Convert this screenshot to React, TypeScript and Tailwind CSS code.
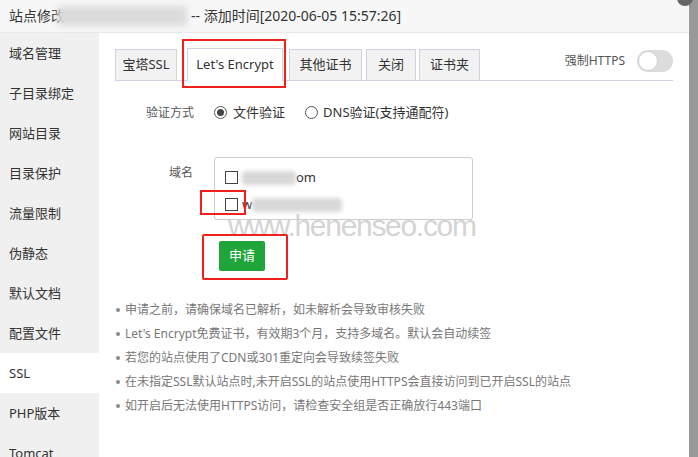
import React from "react";

const font = { fontFamily: '"Noto Sans", "Noto Sans CJK SC", sans-serif' };

const menu = ["域名管理", "子目录绑定", "网站目录", "目录保护", "流量限制", "伪静态", "默认文档", "配置文件", "SSL", "PHP版本", "Tomcat"];

const tips = [
  "申请之前，请确保域名已解析，如未解析会导致审核失败",
  "Let's Encrypt免费证书，有效期3个月，支持多域名。默认会自动续签",
  "若您的站点使用了CDN或301重定向会导致续签失败",
  "在未指定SSL默认站点时,未开启SSL的站点使用HTTPS会直接访问到已开启SSL的站点",
  "如开启后无法使用HTTPS访问，请检查安全组是否正确放行443端口",
];

const Blur = ({ w }: { w: number }) => (
  <span className="inline-block h-[14px] rounded-sm bg-[#d8d8d8] blur-[2px] align-middle" style={{ width: w }} />
);

export default function App() {
  return (
    <div className="flex h-[457px] w-[698px] overflow-hidden bg-white text-[#333]" style={font}>
      <div className="flex w-[689px] flex-col">
        {/* title bar */}
        <div className="flex h-[33px] shrink-0 items-center border-b border-[#e8e8e8] bg-[#f7f7f7] pl-[9px] text-[14px] leading-none">
          <span>站点修改</span>
          <span className="-ml-[8px] inline-block h-[20px] w-[130px] bg-[#dcdcdc] blur-[3px]" />
          <span className="ml-[4px]">-- 添加时间[2020-06-05 15:57:26]</span>
        </div>

        <div className="flex flex-1">
          {/* sidebar */}
          <div className="flex w-[99px] shrink-0 flex-col bg-[#f0f0f0]">
            {menu.map((m) => (
              <div
                key={m}
                className={`flex h-[40px] shrink-0 items-center pl-[9px] text-[13px] leading-none ${m === "SSL" ? "bg-white" : ""}`}
              >
                {m}
              </div>
            ))}
          </div>

          {/* content */}
          <div className="relative flex-1 pl-[16px] pr-[16px]">
            <div className="mt-[15px] flex items-end border-b border-[#d4d2e2] pr-0">
              <div className="flex h-[31px] w-[62px] items-center justify-center border border-b-0 border-[#d4d2e2] bg-[#f2f2f2] text-[13px]">宝塔SSL</div>
              <div className="relative ml-[10px] flex h-[33px] w-[96px] items-center justify-center border border-b-0 border-[#d4d2e2] bg-white text-[13px] -mb-px">
                Let's Encrypt
                <div className="absolute -left-[6px] -top-[10px] h-[49px] w-[104px] border-2 border-[#f0211c]" />
              </div>
              <div className="ml-[6px] flex h-[31px] w-[73px] items-center justify-center border border-b-0 border-[#d4d2e2] bg-[#f2f2f2] text-[13px]">其他证书</div>
              <div className="ml-[4px] flex h-[31px] w-[50px] items-center justify-center border border-b-0 border-[#d4d2e2] bg-[#f2f2f2] text-[13px]">关闭</div>
              <div className="ml-[3px] flex h-[31px] w-[61px] items-center justify-center border border-b-0 border-[#d4d2e2] bg-[#f2f2f2] text-[13px]">证书夹</div>
              <div className="mb-[8px] ml-auto flex items-center">
                <span className="text-[12px] leading-none text-[#555]">强制HTTPS</span>
                <div className="ml-[12px] flex h-[22px] w-[36px] items-center rounded-full bg-[#dcdcdc] p-[1px]">
                  <div className="h-[20px] w-[20px] rounded-full border border-[#cfcfcf] bg-white" />
                </div>
              </div>
            </div>

            {/* verify mode */}
            <div className="mt-[25px] flex items-center text-[12px] leading-none">
              <span className="w-[79px] text-right text-[#555]">验证方式</span>
              <span className="ml-[20px] flex h-[13px] w-[13px] items-center justify-center rounded-full border border-[#555]">
                <span className="h-[7px] w-[7px] rounded-full bg-[#444]" />
              </span>
              <span className="ml-[6px] text-[13px]">文件验证</span>
              <span className="ml-[20px] h-[13px] w-[13px] rounded-full border border-[#555]" />
              <span className="ml-[5px] text-[13px]">DNS验证(支持通配符)</span>
            </div>

            {/* domains */}
            <div className="mt-[38px] flex">
              <span className="w-[78px] pt-[10px] text-right text-[12px] leading-none text-[#555]">域名</span>
              <div className="ml-[21px] flex h-[63px] w-[259px] flex-col gap-[13px] rounded-[3px] border border-[#cccccc] pl-[10px] pt-[12px]">
                <div className="flex items-center text-[13px] leading-none">
                  <span className="h-[13px] w-[13px] border border-[#444]" />
                  <span className="ml-[4px]"><Blur w={54} /></span>
                  <span>om</span>
                </div>
                <div className="relative flex items-center text-[13px] leading-none">
                  <span className="h-[13px] w-[13px] border border-[#444]" />
                  <span className="ml-[4px]">w</span>
                  <Blur w={90} />
                  <div className="absolute -left-[25px] -top-[8px] h-[25px] w-[46px] border-2 border-[#f0211c]" />
                </div>
              </div>
            </div>

            {/* watermark */}
            <div className="pointer-events-none absolute left-[129px] top-[178px] text-[30px] leading-none tracking-[-1.3px] text-[#c8c8c8]/80" style={{ fontFamily: '"Liberation Sans", sans-serif' }}>
              www.henenseo.com
            </div>

            {/* apply button */}
            <div className="relative ml-[104px] mt-[21px] h-[30px] w-[46px]">
              <div className="flex h-[30px] w-[46px] items-center justify-center rounded-[2px] bg-[#20a53a] text-[13px] text-white">申请</div>
              <div className="absolute -left-[17px] -top-[7px] h-[46px] w-[86px] rounded-[2px] border-2 border-[#f0211c]" />
            </div>

            {/* tips */}
            <ul className="mt-[31px] flex flex-col gap-[8px] text-[12px] leading-[16px] text-[#777]">
              {tips.map((t) => (
                <li key={t} className="flex items-center">
                  <span className="ml-[1px] mr-[5px] h-[4px] w-[4px] rounded-full bg-[#888]" />
                  {t}
                </li>
              ))}
            </ul>
          </div>
        </div>
      </div>
      <div className="relative flex-1 bg-[#999]">
        <div className="absolute -left-[12px] -top-[10px] h-[16px] w-[16px] rounded-full bg-[#666]" />
      </div>
    </div>
  );
}
